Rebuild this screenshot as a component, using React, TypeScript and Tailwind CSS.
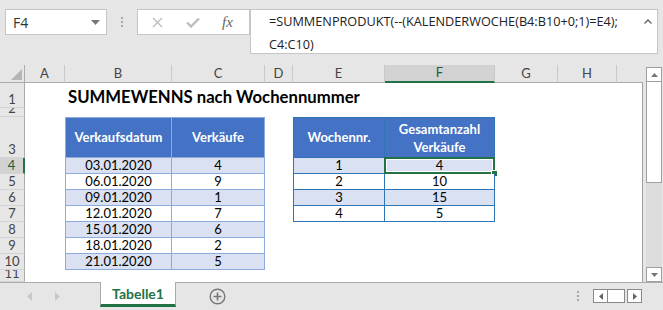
const COL_LABELS = ["A", "B", "C", "D", "E", "F", "G", "H", ""];
const COL_START = [
  "col-start-2",
  "col-start-3",
  "col-start-4",
  "col-start-5",
  "col-start-6",
  "col-start-7",
  "col-start-8",
  "col-start-9",
  "col-start-10",
];
const ROW_START = [
  "row-start-2",
  "row-start-3",
  "row-start-4",
  "row-start-5",
  "row-start-6",
  "row-start-7",
  "row-start-8",
  "row-start-9",
  "row-start-10",
  "row-start-11",
  "row-start-12",
];

const sales = [
  ["03.01.2020", "4"],
  ["06.01.2020", "9"],
  ["09.01.2020", "1"],
  ["12.01.2020", "7"],
  ["15.01.2020", "6"],
  ["18.01.2020", "2"],
  ["21.01.2020", "5"],
];

const weeks = [
  ["1", "4"],
  ["2", "10"],
  ["3", "15"],
  ["4", "5"],
];

const FormulaBar = () => (
  <div className="h-[65px] flex items-start pt-[9px] pl-[5px] shrink-0">
    {/* Name box */}
    <div className="w-[102px] h-[26px] bg-white border border-[#c6c6c6] flex items-center justify-between pl-[7px] pr-[6px]">
      <span className="font-['Open_Sans',sans-serif] text-[14px] text-[#333]">F4</span>
      <svg width="9" height="5" viewBox="0 0 9 5">
        <path d="M0 0h9L4.5 5z" fill="#777" />
      </svg>
    </div>

    <div className="w-[30px] h-[26px] flex flex-col items-center justify-center gap-[2px]">
      <span className="w-[2px] h-[2px] bg-[#a8a8a8]" />
      <span className="w-[2px] h-[2px] bg-[#a8a8a8]" />
      <span className="w-[2px] h-[2px] bg-[#a8a8a8]" />
    </div>

    {/* Cancel / enter / fx */}
    <div className="w-[113px] h-[26px] bg-white border border-[#c6c6c6] flex items-center">
      <svg className="ml-[14px]" width="11" height="11" viewBox="0 0 11 11">
        <path d="M1 1l9 9M10 1l-9 9" stroke="#bdbdbd" strokeWidth="1.4" />
      </svg>
      <svg className="ml-[23px]" width="14" height="11" viewBox="0 0 14 11">
        <path d="M1 5.5l4 4L13 1.5" stroke="#bdbdbd" strokeWidth="2.4" fill="none" />
      </svg>
      <span className="ml-[22px] font-['Liberation_Serif',serif] italic text-[15px] text-[#666] leading-none">
        fx
      </span>
    </div>

    {/* Formula */}
    <div className="w-[408px] h-[45px] bg-white border border-[#c6c6c6] flex">
      <div className="flex-1 pl-[18px] font-['Open_Sans',sans-serif] text-[12.7px] leading-[23px] text-[#222]">
        <div>=SUMMENPRODUKT(--(KALENDERWOCHE(B4:B10+0;1)=E4);</div>
        <div>C4:C10)</div>
      </div>
      <div className="w-[18px] flex justify-center pt-[9px]">
        <svg width="8" height="5" viewBox="0 0 8 5">
          <path d="M0.5 4.5L4 1l3.5 3.5" stroke="#666" strokeWidth="1.4" fill="none" />
        </svg>
      </div>
    </div>
  </div>
);

const Sheet = () => (
  <div className="w-[643px] h-[217px] grid grid-cols-[25px_40px_107px_93px_28px_92px_110px_63px_59px_26px] grid-rows-[18px_25px_9px_41px_16px_16px_16px_16px_16px_16px_16px_12px] overflow-hidden">
    {/* Corner */}
    <div className="col-start-1 row-start-1 relative bg-[#e6e6e6] border-b border-r border-[#ababab] flex items-end justify-end pr-[2px] pb-[2px]">
      <svg width="11" height="11" viewBox="0 0 11 11">
        <path d="M11 0v11H0z" fill="#b5b5b5" />
      </svg>
    </div>

    {/* Column headers */}
    {COL_LABELS.map((c, i) => (
      <div
        key={c + i}
        className={`${COL_START[i]} row-start-1 flex items-center justify-center text-[13px] ${
          c === "F"
            ? "bg-[#d2d2d2] border-b-2 border-b-[#217346] text-[#1e5e3a]"
            : "bg-[#e6e6e6] border-b border-b-[#ababab] text-[#444]"
        } ${c === "" ? "" : "border-r border-r-[#c9c9c9]"}`}
      >
        {c}
      </div>
    ))}

    {/* Row headers */}
    {ROW_START.map((r, i) => (
      <div
        key={r}
        className={`col-start-1 ${r} flex items-end justify-center overflow-hidden text-[13px] leading-[15px] border-b border-b-[#d4d4d4] ${
          i === 3
            ? "bg-[#d2d2d2] border-r-2 border-r-[#217346] text-[#1e5e3a]"
            : "bg-[#e6e6e6] border-r border-r-[#ababab] text-[#444]"
        }`}
      >
        {i + 1}
      </div>
    ))}

    {/* Cell area */}
    <div className="col-start-2 col-end-11 row-start-2 row-end-13 bg-white border-r border-[#9f9f9f]" />

    {/* Title */}
    <div className="col-start-3 row-start-2 self-end whitespace-nowrap pl-[3px] pb-[1px] font-bold text-[16.7px] leading-[20px]">
      SUMMEWENNS nach Wochennummer
    </div>

    {/* Left table */}
    <div className="col-start-3 col-span-2 row-start-4 row-span-8 grid grid-cols-[106px_93px] grid-rows-[40px_16px_16px_16px_16px_16px_16px_16px] border-l border-t border-[#8ea9db] text-[13px]">
      <div className="bg-[#4472c4] border-r border-b border-[#8ea9db] text-white font-bold flex items-center justify-center">
        Verkaufsdatum
      </div>
      <div className="bg-[#4472c4] border-r border-b border-[#8ea9db] text-white font-bold flex items-center justify-center">
        Verkäufe
      </div>
      {sales.map(([d, v], i) => (
        <div key={d} className="contents">
          <div
            className={`${i % 2 === 0 ? "bg-[#d9e1f2]" : "bg-white"} border-r border-b border-[#8ea9db] flex items-center justify-center leading-none`}
          >
            {d}
          </div>
          <div
            className={`${i % 2 === 0 ? "bg-[#d9e1f2]" : "bg-white"} border-r border-b border-[#8ea9db] flex items-center justify-center leading-none`}
          >
            {v}
          </div>
        </div>
      ))}
    </div>

    {/* Right table */}
    <div className="col-start-6 col-span-2 row-start-4 row-span-5 grid grid-cols-[91px_110px] grid-rows-[40px_16px_16px_16px_16px] border-l border-t border-[#2f75b5] text-[13px]">
      <div className="bg-[#4472c4] border-r border-b border-[#2f75b5] text-white font-bold flex items-center justify-center">
        Wochennr.
      </div>
      <div className="bg-[#4472c4] border-r border-b border-[#2f75b5] text-white font-bold flex flex-col items-center justify-center leading-[18px]">
        <span>Gesamtanzahl</span>
        <span>Verkäufe</span>
      </div>
      {weeks.map(([w, n], i) => (
        <div key={w} className="contents">
          <div
            className={`${i % 2 === 0 ? "bg-[#d9e1f2]" : "bg-white"} border-r border-b border-[#2f75b5] flex items-center justify-center leading-none`}
          >
            {w}
          </div>
          <div
            className={`${i % 2 === 0 ? "bg-[#d9e1f2]" : "bg-white"} relative border-r border-b border-[#2f75b5] flex items-center justify-center leading-none`}
          >
            {n}
            {i === 0 && (
              <>
                <div className="absolute -inset-px border-2 border-[#217346] shadow-[inset_0_0_0_1px_white]" />
                <div className="absolute -right-[4px] -bottom-[4px] w-[7px] h-[7px] bg-[#217346] border border-white" />
              </>
            )}
          </div>
        </div>
      ))}
    </div>
  </div>
);

const VScroll = () => (
  <div className="w-[20px] h-[217px] pl-[3px] pr-[1px] pt-[2px] flex flex-col">
    <div className="h-[15px] bg-white border border-[#a0a0a0] flex items-center justify-center">
      <svg width="7" height="4" viewBox="0 0 7 4">
        <path d="M0 4L3.5 0 7 4z" fill="#777" />
      </svg>
    </div>
    <div className="h-[101px] bg-white border-x border-b border-[#a0a0a0]" />
    <div className="flex-1 bg-[#dcdcdc]" />
    <div className="h-[15px] bg-white border border-[#a0a0a0] flex items-center justify-center">
      <svg width="7" height="4" viewBox="0 0 7 4">
        <path d="M0 0h7L3.5 4z" fill="#777" />
      </svg>
    </div>
  </div>
);

const TabBar = () => (
  <div className="h-[28px] border-t border-[#ababab] flex items-start shrink-0">
    <div className="w-[100px] h-[26px] flex items-center">
      <svg className="ml-[27px]" width="5" height="9" viewBox="0 0 5 9">
        <path d="M5 0v9L0 4.5z" fill="#c8c8c8" />
      </svg>
      <svg className="ml-[23px]" width="5" height="9" viewBox="0 0 5 9">
        <path d="M0 0v9L5 4.5z" fill="#c8c8c8" />
      </svg>
    </div>
    <div className="-mt-px w-[76px] h-[25px] bg-white border-x border-[#ababab] border-b-[3px] border-b-[#217346] flex items-center justify-center font-bold text-[14px] text-[#217346]">
      Tabelle1
    </div>
    <div className="ml-[33px] h-[26px] flex items-center">
      <svg width="17" height="17" viewBox="0 0 17 17">
        <circle cx="8.5" cy="8.5" r="7.3" stroke="#777" strokeWidth="1.4" fill="none" />
        <path d="M8.5 4.5v8M4.5 8.5h8" stroke="#777" strokeWidth="1.6" />
      </svg>
    </div>
    <div className="ml-auto mr-[21px] h-[26px] flex items-center">
      <div className="flex flex-col gap-[2px] mr-[14px]">
        <span className="w-[2px] h-[2px] bg-[#a8a8a8]" />
        <span className="w-[2px] h-[2px] bg-[#a8a8a8]" />
        <span className="w-[2px] h-[2px] bg-[#a8a8a8]" />
      </div>
      <div className="w-[15px] h-[14px] border border-[#8a8a8a] bg-white flex items-center justify-center">
        <svg width="4" height="7" viewBox="0 0 4 7">
          <path d="M4 0v7L0 3.5z" fill="#666" />
        </svg>
      </div>
      <div className="w-[17px] h-[14px] border-y border-r border-[#8a8a8a] bg-white" />
      <div className="ml-[2px] w-[15px] h-[14px] border border-[#8a8a8a] bg-white flex items-center justify-center">
        <svg width="4" height="7" viewBox="0 0 4 7">
          <path d="M0 0v7L4 3.5z" fill="#666" />
        </svg>
      </div>
    </div>
  </div>
);

export default function App() {
  return (
    <div className="w-[663px] h-[310px] bg-[#e6e6e6] flex flex-col overflow-hidden font-['Lato',sans-serif] text-black">
      <FormulaBar />
      <div className="flex h-[217px] shrink-0">
        <Sheet />
        <VScroll />
      </div>
      <TabBar />
    </div>
  );
}
